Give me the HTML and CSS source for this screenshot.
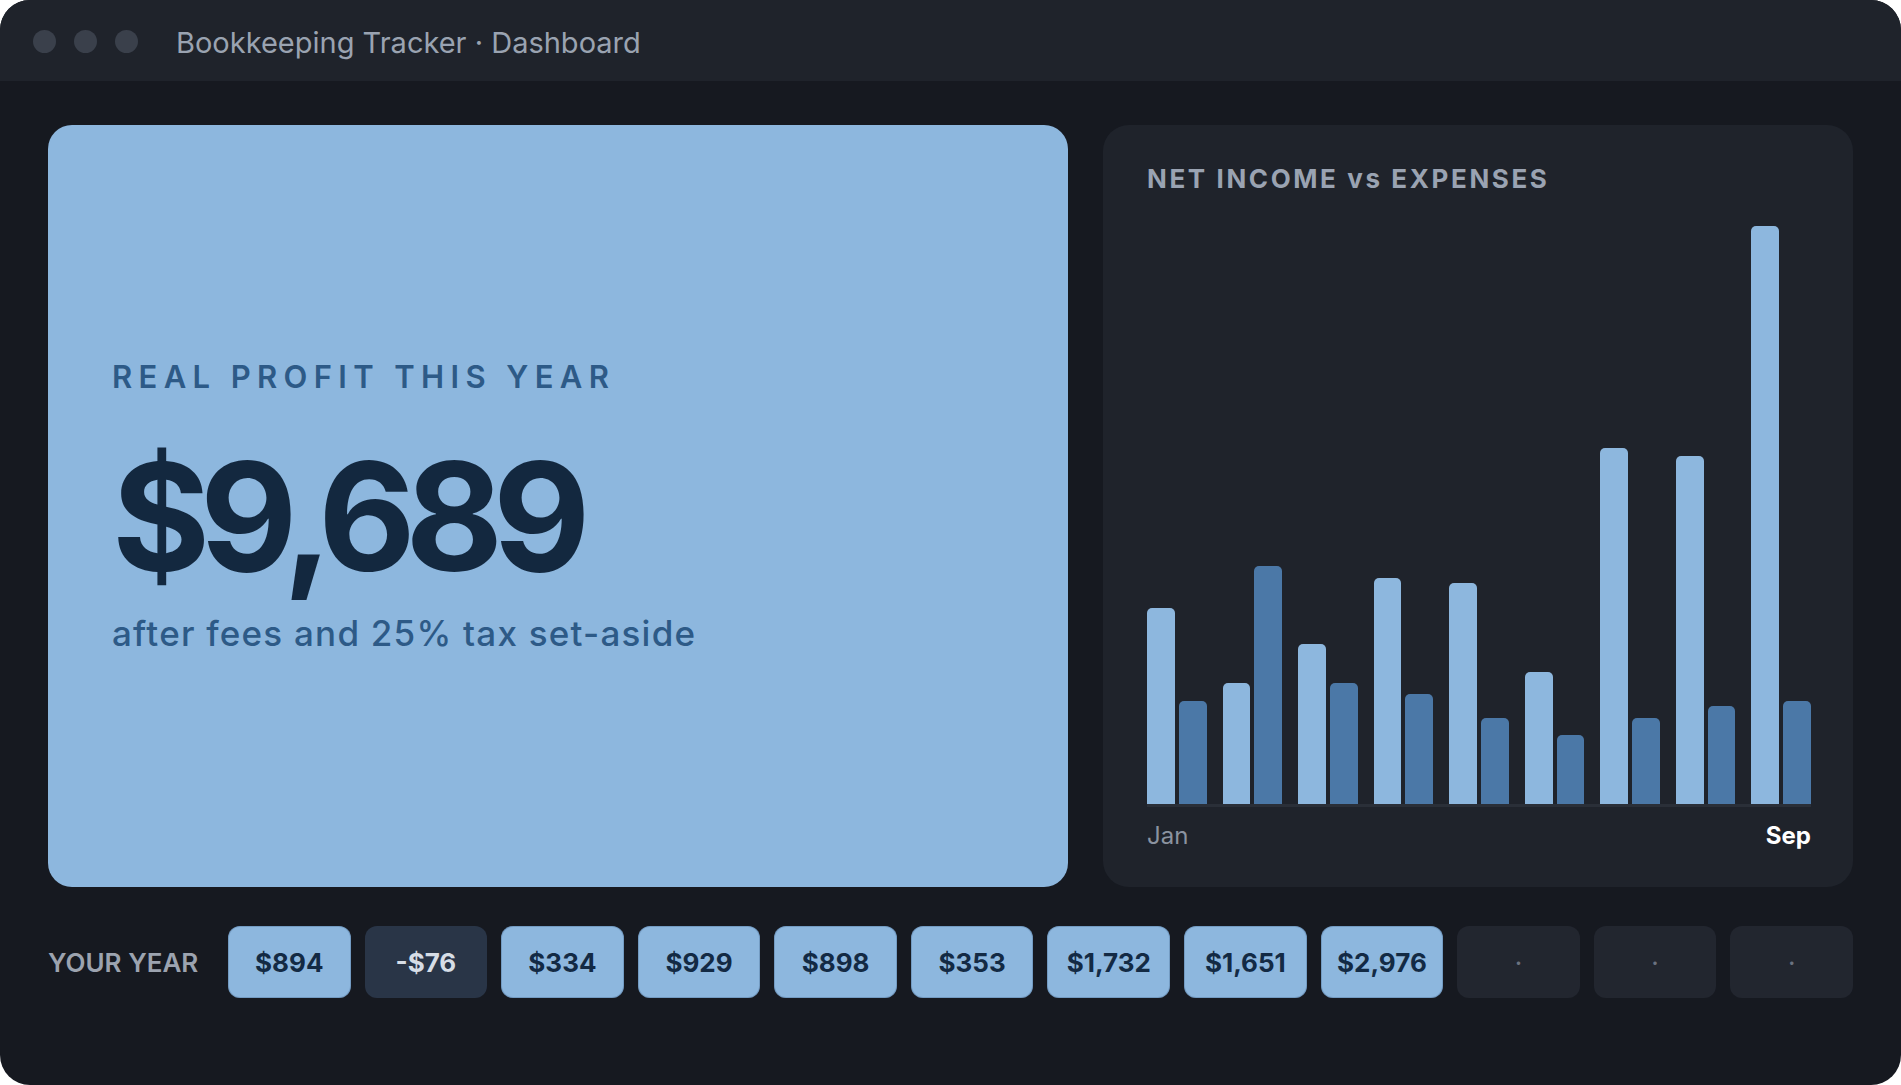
FILE: index.html
```html
<!DOCTYPE html>
<html>
<head>
<meta charset="utf-8">
<title>Bookkeeping Tracker · Dashboard</title>
<link rel="stylesheet" href="styles.css">
</head>
<body>
<div class="window">
  <header class="titlebar">
    <div class="dots"><span class="dot"></span><span class="dot"></span><span class="dot"></span></div>
    <div class="title">Bookkeeping Tracker · Dashboard</div>
  </header>
  <main class="main">
    <div class="cards">
      <section class="profit-card">
        <div class="profit-label">REAL PROFIT THIS YEAR</div>
        <div class="profit-value">$9,689</div>
        <div class="profit-sub">after fees and 25% tax set-aside</div>
      </section>
      <section class="chart-card">
        <div class="chart-title">NET INCOME vs EXPENSES</div>
        <div class="chart">
          <div class="group"><div class="bar inc" style="height:33.8%"></div><div class="bar exp" style="height:17.8%"></div></div>
          <div class="group"><div class="bar inc" style="height:20.9%"></div><div class="bar exp" style="height:41.0%"></div></div>
          <div class="group"><div class="bar inc" style="height:27.6%"></div><div class="bar exp" style="height:20.9%"></div></div>
          <div class="group"><div class="bar inc" style="height:39.0%"></div><div class="bar exp" style="height:19.0%"></div></div>
          <div class="group"><div class="bar inc" style="height:38.1%"></div><div class="bar exp" style="height:14.8%"></div></div>
          <div class="group"><div class="bar inc" style="height:22.8%"></div><div class="bar exp" style="height:11.9%"></div></div>
          <div class="group"><div class="bar inc" style="height:61.4%"></div><div class="bar exp" style="height:14.8%"></div></div>
          <div class="group"><div class="bar inc" style="height:60.0%"></div><div class="bar exp" style="height:16.9%"></div></div>
          <div class="group"><div class="bar inc" style="height:99.7%"></div><div class="bar exp" style="height:17.8%"></div></div>
        </div>
        <div class="axis"></div>
        <div class="chart-labels"><span class="lbl-start">Jan</span><span class="lbl-end">Sep</span></div>
      </section>
    </div>
    <div class="year-row">
      <div class="year-label">YOUR YEAR</div>
      <div class="pills">
        <div class="pill pos">$894</div>
        <div class="pill neg">-$76</div>
        <div class="pill pos">$334</div>
        <div class="pill pos">$929</div>
        <div class="pill pos">$898</div>
        <div class="pill pos">$353</div>
        <div class="pill pos">$1,732</div>
        <div class="pill pos">$1,651</div>
        <div class="pill pos">$2,976</div>
        <div class="pill empty">·</div>
        <div class="pill empty">·</div>
        <div class="pill empty">·</div>
      </div>
    </div>
  </main>
</div>
</body>
</html>
```
FILE: styles.css
```css
html, body {
  margin: 0;
  padding: 0;
  background: #ffffff;
}
body {
  font-family: Inter, "Noto Sans", sans-serif;
}
.window {
  width: 1901px;
  height: 1085px;
  background: #161920;
  border-radius: 30px;
  overflow: hidden;
  display: flex;
  flex-direction: column;
}
.titlebar {
  height: 81px;
  flex: none;
  background: #1f232b;
  display: flex;
  align-items: center;
  padding: 2px 0 0 33px;
  box-sizing: border-box;
}
.dots {
  display: flex;
  gap: 18px;
}
.dot {
  width: 23px;
  height: 23px;
  border-radius: 50%;
  background: #3a404b;
}
.title {
  margin-left: 38px;
  margin-top: 1px;
  font-size: 29px;
  color: #9aa3b1;
  line-height: 1;
}
.main {
  padding: 44px 48px 0 48px;
  display: flex;
  flex-direction: column;
  gap: 39px;
}
.cards {
  display: grid;
  grid-template-columns: 1.36fr 1fr;
  gap: 35px;
  height: 762px;
}
.profit-card {
  background: #8db7de;
  border-radius: 24px;
  padding: 0 64px;
  display: flex;
  flex-direction: column;
  justify-content: center;
}
.profit-label {
  font-size: 31px;
  font-weight: 600;
  letter-spacing: 0.205em;
  color: #2d5a87;
  line-height: 1;
}
.profit-value {
  font-size: 150px;
  font-weight: 700;
  letter-spacing: -0.068em;
  color: #13283f;
  line-height: 1;
  margin-top: 50px;
}
.profit-sub {
  font-size: 35px;
  font-weight: 500;
  letter-spacing: 0.035em;
  color: #2d5a87;
  line-height: 1;
  margin-top: 24px;
}
.chart-card {
  background: #1f232b;
  border-radius: 26px;
  padding: 41px 42px 39px 44px;
  display: flex;
  flex-direction: column;
}
.chart-title {
  font-size: 26px;
  font-weight: 700;
  letter-spacing: 0.1em;
  color: #9aa3b2;
  line-height: 1;
}
.chart {
  margin-top: 32px;
  flex: 1;
  display: flex;
  align-items: flex-end;
  gap: 16px;
}
.group {
  flex: 1;
  height: 100%;
  display: flex;
  align-items: flex-end;
  gap: 4px;
}
.bar {
  flex: 1;
  border-radius: 5px 5px 0 0;
}
.bar.inc {
  background: #8db7de;
}
.bar.exp {
  background: #4b78a7;
}
.axis {
  height: 3px;
  background: #2a2f38;
}
.chart-labels {
  margin-top: 17px;
  display: flex;
  justify-content: space-between;
  font-size: 24px;
  line-height: 1;
}
.lbl-start {
  color: #8b93a0;
}
.lbl-end {
  color: #ffffff;
  font-weight: 700;
}
.year-row {
  display: flex;
  align-items: center;
  height: 72px;
}
.year-label {
  width: 180px;
  flex: none;
  font-size: 26px;
  font-weight: 600;
  color: #9ca3af;
  line-height: 1;
  margin-top: 2px;
}
.pills {
  flex: 1;
  display: flex;
  gap: 14px;
  height: 100%;
}
.pill {
  flex: 1;
  border-radius: 12px;
  display: flex;
  align-items: center;
  justify-content: center;
  font-size: 26px;
  font-weight: 700;
}
.pill.pos {
  background: #8db7de;
  color: #132a44;
  box-shadow: inset 0 0 0 1px rgba(40, 70, 110, 0.25);
}
.pill.neg {
  background: #293547;
  color: #d6dde6;
}
.pill.empty {
  background: #22262f;
  color: #6b7280;
  font-weight: 400;
}
```
